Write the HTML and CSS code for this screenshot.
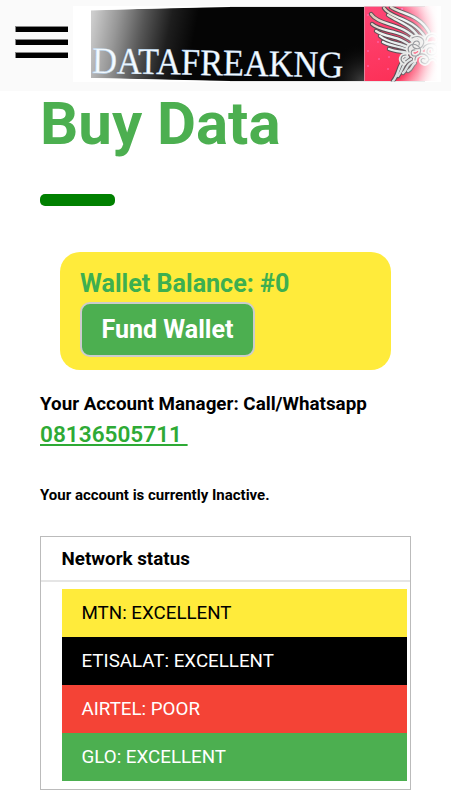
FILE: index.html
```html
<!DOCTYPE html>
<html lang="en">
<head>
<meta charset="utf-8">
<meta name="viewport" content="width=device-width, initial-scale=1">
<title>Buy Data - DataFreakNG</title>
<link rel="stylesheet" href="styles.css">
</head>
<body>
<header class="header">
  <button class="menu" aria-label="Menu"><span></span><span></span><span></span></button>
  <svg class="logo" viewBox="73 6 368 76" width="368" height="76" role="img" aria-label="DATAFREAKNG">
    <defs>
      <linearGradient id="fadeIn" x1="88" y1="38" x2="190" y2="58" gradientUnits="userSpaceOnUse">
        <stop offset="0" stop-color="#fff" stop-opacity=".8"/>
        <stop offset=".25" stop-color="#fff" stop-opacity=".58"/>
        <stop offset=".5" stop-color="#fff" stop-opacity=".32"/>
        <stop offset=".75" stop-color="#fff" stop-opacity=".1"/>
        <stop offset="1" stop-color="#fff" stop-opacity="0"/>
      </linearGradient>
      <radialGradient id="shine" cx="364" cy="82" r="42" gradientUnits="userSpaceOnUse">
        <stop offset="0" stop-color="#444"/><stop offset="1" stop-color="#000" stop-opacity="0"/>
      </radialGradient>
      <linearGradient id="red" x1="0" y1="0" x2=".3" y2="1">
        <stop offset="0" stop-color="#ff4777"/><stop offset="1" stop-color="#fc3158"/>
      </linearGradient>
      <linearGradient id="fadeOut" x1="398" y1="0" x2="438" y2="0" gradientUnits="userSpaceOnUse">
        <stop offset="0" stop-color="#fff" stop-opacity="0"/>
        <stop offset=".5" stop-color="#fff" stop-opacity=".3"/>
        <stop offset=".8" stop-color="#fff" stop-opacity=".68"/>
        <stop offset="1" stop-color="#fff"/>
      </linearGradient>
      <radialGradient id="corners" cx="380" cy="44" r="66" gradientUnits="userSpaceOnUse">
        <stop offset=".6" stop-color="#fff" stop-opacity="0"/>
        <stop offset=".95" stop-color="#fff" stop-opacity=".9"/>
      </radialGradient>
      <linearGradient id="metal" x1="375" y1="10" x2="425" y2="60" gradientUnits="userSpaceOnUse">
        <stop offset="0" stop-color="#d9c2ae"/><stop offset=".35" stop-color="#f0f5f5"/><stop offset="1" stop-color="#d3dadb"/>
      </linearGradient>
      <clipPath id="logoArea"><rect x="73" y="6" width="368" height="76"/></clipPath>
      <g id="feathers">
        <path d="M391 7C401 14 419 14 429 32"/>
        <path d="M384 8C391 19 412 17 425 37"/>
        <path d="M388 15C400 23 413 25 421 41"/>
        <path d="M371 14C379 26 402 22 418 41"/>
        <path d="M372 24C382 33 402 29 415 44"/>
        <path d="M376 31C386 38 401 36 412 47"/>
        <path d="M380 36C389 44 400 42 411 49"/>
        <path d="M383 42C392 47 401 46 410 51"/>
        <path d="M389 49C396 52 402 51 409 53"/>
        <path d="M393 81C400 73 397 64 408 57"/>
        <path d="M398 76C404 69 401 64 411 59"/>
        <path d="M403 73C408 69 405 65 414 61"/>
        <path d="M408 71C413 68 411 66 415 63"/>
      </g>
      <path id="scrolls" d="M412 38c7-4 14 1 11 7s-12 4-10-1 8-3 6 1M423 48c5-7 15-5 14 2s-11 6-10 1 7-4 6 0M409 52c-3-6 4-10 9-6s2 10-3 10-5-7 0-6M415 60c0-6 8-8 12-4s0 9-4 7-1-6 2-4M427 62c5-6 9-3 10 0M426 40c1-6 8-7 11-3s-1 8-4 6M404 63c-5-3-3-8 2-8"/>
    </defs>
    <rect x="73" y="6" width="368" height="76" fill="#fff"/>
    <g clip-path="url(#logoArea)">
      <path d="M91 10L230 7H365V81H230L91 78Z" fill="#050505"/>
      <rect x="90" y="7" width="120" height="73" fill="url(#fadeIn)"/>
      <rect x="310" y="30" width="54" height="51" fill="url(#shine)"/>
      <path d="M90 6H235L90 10.5Z" fill="#fff"/>
      <path d="M90 78L220 81.3V82H90Z" fill="#fff"/>
      <rect x="364.5" y="6" width="77" height="75" fill="url(#red)"/>
      <path d="M364.5 6v75" stroke="#e5849b" stroke-width="1"/>
      <g fill="#ff78c8"><circle cx="368" cy="15" r=".8"/><circle cx="378" cy="42" r=".8"/><circle cx="368" cy="51" r=".8"/><circle cx="389" cy="57" r=".8"/><circle cx="379" cy="59" r=".8"/><circle cx="368" cy="66" r=".8"/><circle cx="388" cy="69" r=".8"/><circle cx="402" cy="9" r="1"/></g>
      <g fill="none" stroke-linecap="round">
        <use href="#feathers" stroke="#5c4f55" stroke-width="4.4"/>
        <use href="#feathers" stroke="url(#metal)" stroke-width="2.3"/>
        <use href="#scrolls" stroke="#e9e8e6" stroke-width="4.5"/>
        <use href="#scrolls" stroke="#777b80" stroke-width="1.1"/>
      </g>
      <rect x="396" y="6" width="46" height="76" fill="url(#fadeOut)"/>
      <rect x="396" y="6" width="46" height="76" fill="url(#corners)"/>
      <path d="M230 6.5H425M230 81.5H425" stroke="#ddd" stroke-opacity=".65"/>
    </g>
    <text class="logo-text" x="92" y="73" textLength="251" lengthAdjust="spacingAndGlyphs" transform="rotate(1 92 73)">DATAFREAKNG</text>
  </svg>
</header>
<main class="content">
  <h1 class="title">Buy Data</h1>
  <div class="bar"></div>
  <section class="wallet">
    <div class="balance">Wallet Balance: #0</div>
    <button class="fund">Fund Wallet</button>
  </section>
  <div class="manager">Your Account Manager: Call/Whatsapp</div>
  <a class="phone" href="tel:08136505711">08136505711&nbsp;</a>
  <p class="account">Your account is currently Inactive.</p>
  <section class="network">
    <h2 class="network-title">Network status</h2>
    <ul class="statuses">
      <li class="mtn">MTN: EXCELLENT</li>
      <li class="etisalat">ETISALAT: EXCELLENT</li>
      <li class="airtel">AIRTEL: POOR</li>
      <li class="glo">GLO: EXCELLENT</li>
    </ul>
  </section>
</main>
</body>
</html>
```
FILE: styles.css
```css
* { box-sizing: border-box; }
body { margin: 0; background: #fff; color: #000; font-family: Roboto, sans-serif; overflow: hidden; }
.header { display: flex; height: 91px; padding: 6px 10px 0 15px; background: #fafafa; }
.menu { display: flex; flex-direction: column; gap: 7px; width: 53px; margin-right: 5px; padding: 20px 0 0; border: 0; background: none; }
.menu span { width: 53px; height: 6px; border: 1px solid #888; border-width: 1px 0 0 1px; background: #000; }
.logo { display: block; flex: none; overflow: visible; }
.logo-text { font: 37.5px "Liberation Serif", serif; fill: #f4faff; stroke: #b9d8f2; stroke-width: .4px; }
.content { padding: 0 40px; }
.title { margin: 0; font-size: 60px; line-height: 65px; font-weight: 700; color: #4caf50; white-space: nowrap; }
.bar { width: 75px; height: 12px; margin-top: 38px; border-radius: 5px; background: #008000; }
.wallet { width: 331px; height: 118px; margin: 45.5px 0 0 20px; padding: 16px 20px; border-radius: 20px; background: #ffeb3b; }
.balance { height: 34.5px; font-size: 25.1px; line-height: 31px; font-weight: 700; color: #3daf50; white-space: nowrap; }
.fund { display: block; width: 175px; height: 55px; padding: 0; border: 2px solid #ccc; border-radius: 10px; background: #4caf50; color: #fff; font: 700 25px Roboto, sans-serif; white-space: nowrap; }
.manager { margin-top: 22.5px; font-size: 18.8px; line-height: 24px; font-weight: 700; white-space: nowrap; }
.phone { display: block; width: max-content; margin-top: 3.5px; font-size: 22.6px; line-height: 30px; font-weight: 600; color: #2eaa35; text-decoration-thickness: 2px; text-underline-offset: 2px; text-decoration-skip-ink: none; }
.account { margin: 35.5px 0 0; font-size: 15px; line-height: 20px; font-weight: 700; white-space: nowrap; }
.network { height: 254px; margin-top: 31px; border: 1px solid #bbb; }
.network-title { height: 45px; margin: 0; padding-left: 20.5px; border-bottom: 2px solid #e5e5e5; font-size: 18.8px; line-height: 44px; font-weight: 700; }
.statuses { margin: 7px 3px 0 20.5px; padding: 0; list-style: none; font-size: 18.75px; line-height: 48px; }
.statuses li { height: 48px; padding-left: 20px; white-space: nowrap; }
.mtn { background: #ffeb3b; }
.etisalat { background: #000; color: #fff; }
.airtel { background: #f44336; color: #fff; }
.glo { background: #4caf50; color: #fff; }
```
